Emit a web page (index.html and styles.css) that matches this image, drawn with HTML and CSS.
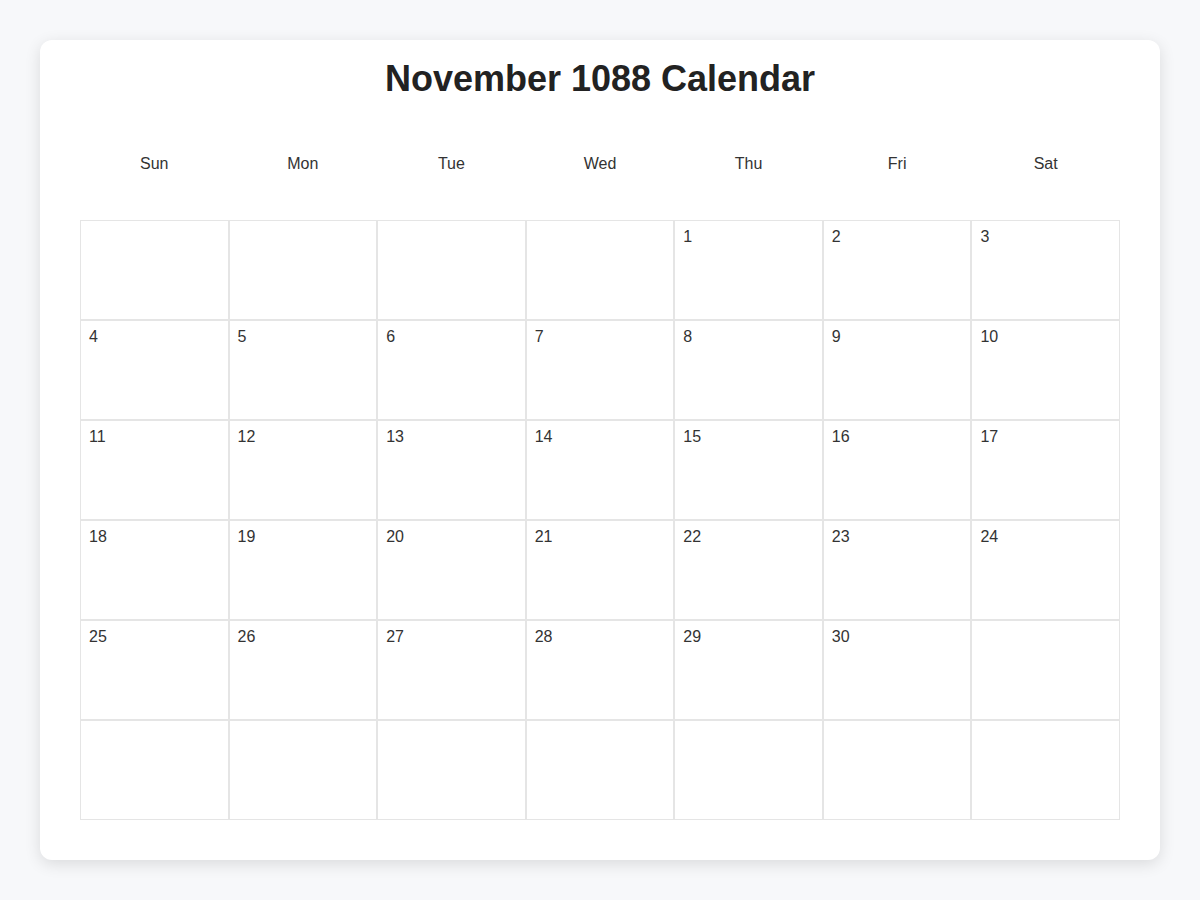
FILE: index.html
```html
<!DOCTYPE html>
<html lang="en">
<head>
<meta charset="utf-8">
<title>November 1088 Calendar</title>
<link rel="stylesheet" href="styles.css">
</head>
<body>
<main class="card">
  <h1 class="title">November 1088 Calendar</h1>
  <div class="weekdays">
    <div class="weekday">Sun</div>
    <div class="weekday">Mon</div>
    <div class="weekday">Tue</div>
    <div class="weekday">Wed</div>
    <div class="weekday">Thu</div>
    <div class="weekday">Fri</div>
    <div class="weekday">Sat</div>
  </div>
  <div class="days">
    <div class="day"></div><div class="day"></div><div class="day"></div><div class="day"></div>
    <div class="day">1</div><div class="day">2</div><div class="day">3</div>
    <div class="day">4</div><div class="day">5</div><div class="day">6</div><div class="day">7</div>
    <div class="day">8</div><div class="day">9</div><div class="day">10</div>
    <div class="day">11</div><div class="day">12</div><div class="day">13</div><div class="day">14</div>
    <div class="day">15</div><div class="day">16</div><div class="day">17</div>
    <div class="day">18</div><div class="day">19</div><div class="day">20</div><div class="day">21</div>
    <div class="day">22</div><div class="day">23</div><div class="day">24</div>
    <div class="day">25</div><div class="day">26</div><div class="day">27</div><div class="day">28</div>
    <div class="day">29</div><div class="day">30</div><div class="day"></div>
    <div class="day"></div><div class="day"></div><div class="day"></div><div class="day"></div>
    <div class="day"></div><div class="day"></div><div class="day"></div>
  </div>
</main>
</body>
</html>
```

FILE: styles.css
```css
html, body {
  margin: 0;
  padding: 0;
}
body {
  background: #f7f8fa;
  font-family: "Liberation Sans", Arial, sans-serif;
  color: #333;
  padding: 40px;
}
.card {
  background: #fff;
  border-radius: 12px;
  box-shadow: 0 4px 16px rgba(0, 0, 0, 0.12);
  padding: 18px 40px 40px;
}
.title {
  margin: 0;
  text-align: center;
  font-size: 36px;
  line-height: 41px;
  font-weight: 700;
  color: #222;
}
.weekdays {
  display: grid;
  grid-template-columns: repeat(7, 1fr);
  margin-top: 55px;
  margin-bottom: 46px;
}
.weekday {
  text-align: center;
  font-size: 16px;
  line-height: 20px;
  color: #333;
}
.days {
  display: grid;
  grid-template-columns: repeat(7, 1fr);
  grid-auto-rows: 100px;
}
.day {
  border: 1px solid #e5e5e5;
  padding: 7px 8px;
  font-size: 16px;
  line-height: 18px;
  color: #333;
}
```
